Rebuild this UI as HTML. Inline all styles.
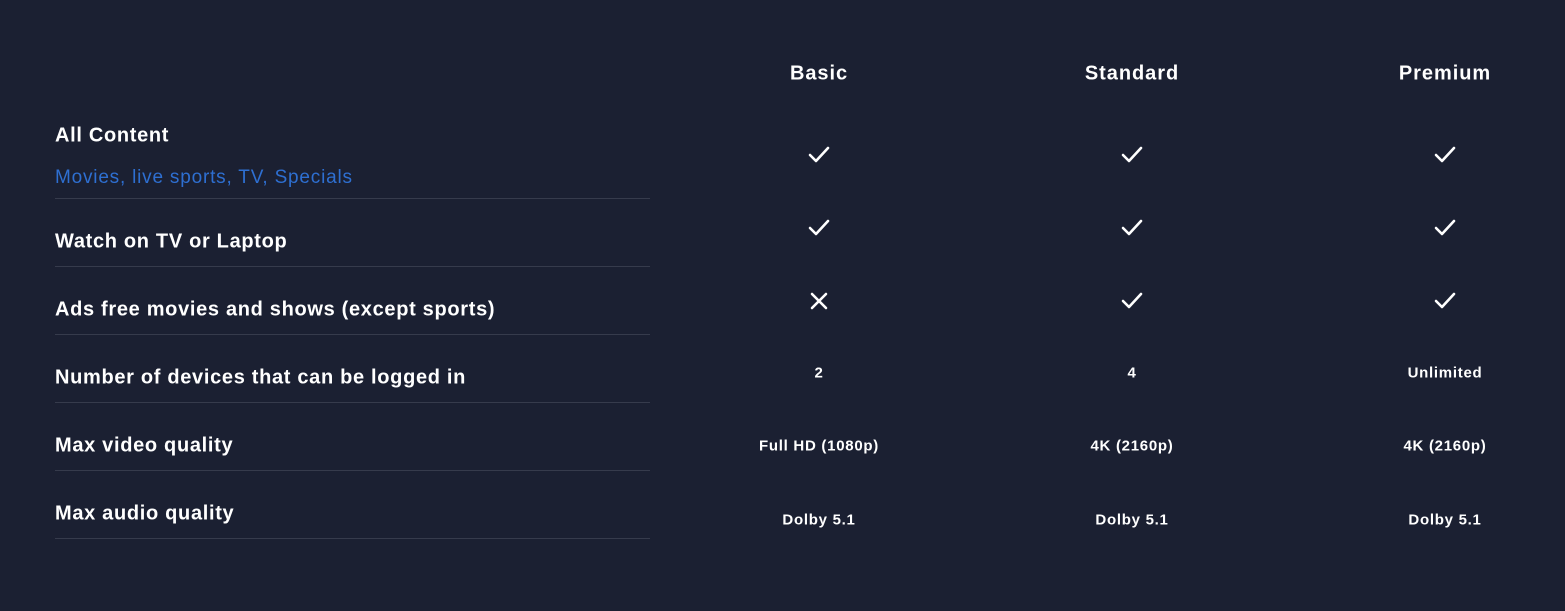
<!DOCTYPE html>
<html><head><style>
body{margin:0;width:1565px;height:611px;background:#1b2032;font-family:"Liberation Sans",sans-serif;color:#fff;position:relative;overflow:hidden}
.a{position:absolute;white-space:nowrap}
.l{left:55px;font-size:20px;font-weight:bold;letter-spacing:.68px;transform:translateY(-50%)}
.b{left:55px;font-size:19px;color:#2e6fd1;letter-spacing:.8px;transform:translateY(-50%)}
.h{font-size:20px;font-weight:bold;transform:translate(-50%,-50%);letter-spacing:.95px}
.v{font-size:15px;font-weight:bold;transform:translate(-50%,-50%);letter-spacing:.72px}
.line{position:absolute;left:55px;width:595px;height:1px;background:#363b4c}
svg{position:absolute}
</style></head><body>
<div class="a h" style="left:819px;top:74px">Basic</div>
<div class="a h" style="left:1132px;top:74px">Standard</div>
<div class="a h" style="left:1445px;top:74px">Premium</div>

<div class="a l" style="top:136px">All Content</div>
<div class="a b" style="top:178px">Movies, live sports, TV, Specials</div>
<div class="line" style="top:198px"></div>
<div class="a l" style="top:242px">Watch on TV or Laptop</div>
<div class="line" style="top:266px"></div>
<div class="a l" style="top:310px">Ads free movies and shows (except sports)</div>
<div class="line" style="top:334px"></div>
<div class="a l" style="top:378px">Number of devices that can be logged in</div>
<div class="line" style="top:402px"></div>
<div class="a l" style="top:446px">Max video quality</div>
<div class="line" style="top:470px"></div>
<div class="a l" style="top:514px">Max audio quality</div>
<div class="line" style="top:538px"></div>

<svg width="1565" height="611" style="left:0;top:0" fill="none" stroke="#fff" stroke-width="2.6" stroke-linecap="round" stroke-linejoin="round">
<path d="M810 155 L816 161 L828 148"/>
<path d="M1123 155 L1129 161 L1141 148"/>
<path d="M1436 155 L1442 161 L1454 148"/>
<path d="M810 228 L816 234 L828 221"/>
<path d="M1123 228 L1129 234 L1141 221"/>
<path d="M1436 228 L1442 234 L1454 221"/>
<path d="M812 294 L826 308 M826 294 L812 308"/>
<path d="M1123 301 L1129 307 L1141 294"/>
<path d="M1436 301 L1442 307 L1454 294"/>
</svg>

<div class="a v" style="left:819px;top:373px">2</div>
<div class="a v" style="left:1132px;top:373px">4</div>
<div class="a v" style="left:1445px;top:373px">Unlimited</div>
<div class="a v" style="left:819px;top:446px">Full HD (1080p)</div>
<div class="a v" style="left:1132px;top:446px">4K (2160p)</div>
<div class="a v" style="left:1445px;top:446px">4K (2160p)</div>
<div class="a v" style="left:819px;top:520px">Dolby 5.1</div>
<div class="a v" style="left:1132px;top:520px">Dolby 5.1</div>
<div class="a v" style="left:1445px;top:520px">Dolby 5.1</div>
</body></html>
